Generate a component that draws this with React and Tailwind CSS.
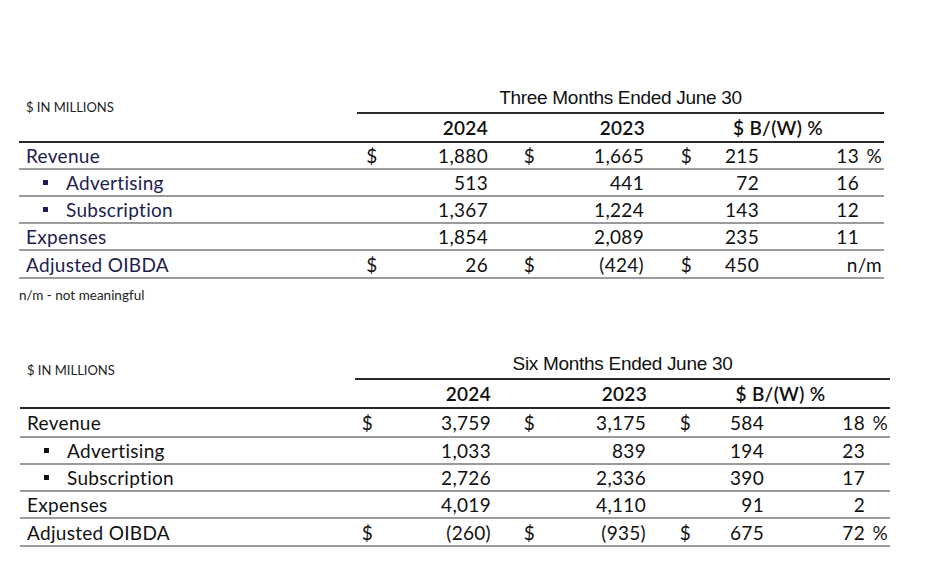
import React from "react";

const topRows = [
  { label: "Revenue", d: true, v1: "1,880", v2: "1,665", v3: "215", pct: "13", sign: "%" },
  { label: "Advertising", bullet: true, v1: "513", v2: "441", v3: "72", pct: "16" },
  { label: "Subscription", bullet: true, v1: "1,367", v2: "1,224", v3: "143", pct: "12" },
  { label: "Expenses", v1: "1,854", v2: "2,089", v3: "235", pct: "11" },
  { label: "Adjusted OIBDA", d: true, v1: "26", v2: "(424)", v3: "450", pct: "n/m", wide: true },
];

const bottomRows = [
  { label: "Revenue", d: true, v1: "3,759", v2: "3,175", v3: "584", pct: "18", sign: "%" },
  { label: "Advertising", bullet: true, v1: "1,033", v2: "839", v3: "194", pct: "23" },
  { label: "Subscription", bullet: true, v1: "2,726", v2: "2,336", v3: "390", pct: "17" },
  { label: "Expenses", v1: "4,019", v2: "4,110", v3: "91", pct: "2" },
  { label: "Adjusted OIBDA", d: true, v1: "(260)", v2: "(935)", v3: "675", pct: "72", sign: "%" },
];

function Table({ title, rows, cols, labelColor, heights, unitPad }) {
  return (
    <div className={`grid ${cols} text-[19px] tracking-[0.3px] leading-none text-[#111]`}>
      {/* title row */}
      <div className={`flex items-end pl-[7px] ${unitPad} text-[13px] tracking-normal font-normal text-[#222]`}>
        $ IN MILLIONS
      </div>
      <div className="col-span-8 border-b-2 border-[#2a2a2a] flex items-center justify-center h-[28px] pb-[4px] font-['Liberation_Sans_Narrow','Liberation_Sans',sans-serif] text-[19px] tracking-[-0.3px]">
        {title}
      </div>

      {/* year header row */}
      <div className="col-span-9 grid grid-cols-subgrid border-b-2 border-[#2a2a2a] h-[29px] items-center font-semibold">
        <div className="col-span-2" />
        <div className="text-right pr-[2px]">2024</div>
        <div />
        <div className="text-right pr-[1px]">2023</div>
        <div />
        <div className="col-span-2 text-center pr-[2px] -ml-[4px]">$ B/(W) %</div>
        <div />
      </div>

      {rows.map((r, i) => (
        <div
          key={r.label}
          className={`col-span-9 grid grid-cols-subgrid border-b-2 border-[#9b9b9b] items-center ${heights[i]}`}
        >
          <div className={`flex items-center ${labelColor}`}>
            {r.bullet ? (
              <>
                <span className="ml-[24px] mr-[18px] w-[5px] h-[5px] bg-current inline-block" />
                {r.label}
              </>
            ) : (
              <span className="pl-[7px]">{r.label}</span>
            )}
          </div>
          <div className="text-center">{r.d ? "$" : ""}</div>
          <div className="text-right pr-[2px]">{r.v1}</div>
          <div className="text-right pr-[10px]">{r.d ? "$" : ""}</div>
          <div className="text-right pr-[2px]">{r.v2}</div>
          <div className="text-right pr-[10px]">{r.d ? "$" : ""}</div>
          <div className="text-right pr-[1px]">{r.v3}</div>
          {r.wide ? (
            <div className="col-span-2 text-right pr-[2px]">{r.pct}</div>
          ) : (
            <>
              <div className="text-right pr-[1px]">{r.pct}</div>
              <div className="text-right pr-[2px]">{r.sign || ""}</div>
            </>
          )}
        </div>
      ))}
    </div>
  );
}

export default function App() {
  return (
    <div className="w-[944px] h-[580px] bg-white font-['Lato','Open_Sans',sans-serif] overflow-hidden">
      <div className="pt-[86px] pl-[19px]">
        <Table
          title="Three Months Ended June 30"
          rows={topRows}
          cols="grid-cols-[338px_30px_103px_55px_101px_56px_58px_100px_24px] w-[865px]"
          labelColor="text-[#1d2150]"
          heights={["h-[27px]", "h-[27px]", "h-[27px]", "h-[27px]", "h-[28px]"]}
          unitPad="pb-0"
        />
        <div className="mt-[6px] text-[13.5px] text-[#222]">n/m - not meaningful</div>
      </div>

      <div className="pt-[47px] pl-[20px]">
        <Table
          title="Six Months Ended June 30"
          rows={bottomRows}
          cols="grid-cols-[335px_25px_113px_52px_103px_53px_64px_101px_24px] w-[870px]"
          labelColor="text-[#111]"
          heights={["h-[29px]", "h-[27px]", "h-[27px]", "h-[27px]", "h-[28px]"]}
          unitPad="pb-[3px]"
        />
      </div>
    </div>
  );
}
